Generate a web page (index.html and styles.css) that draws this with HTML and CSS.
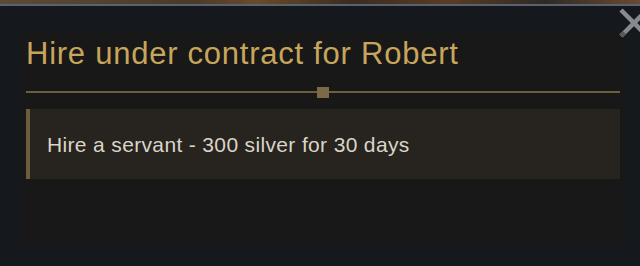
FILE: index.html
```html
<!DOCTYPE html>
<html lang="en">
<head>
    <meta charset="UTF-8">
    <meta name="viewport" content="width=device-width, initial-scale=1.0">
    <title>Hire under contract</title>
    <link rel="stylesheet" href="styles.css">
</head>
<body>

<!-- Game scene peeking out above the dialog -->
<div class="scene-strip"></div>

<div class="modal">
    <button class="close-btn" aria-label="Close">
        <svg width="32" height="32" viewBox="0 0 32 32">
            <line x1="3" y1="3" x2="29" y2="29" stroke="#878b90" stroke-width="4.5"/>
            <line x1="29" y1="3" x2="3" y2="29" stroke="#878b90" stroke-width="4.5"/>
            <line x1="3" y1="29" x2="6.5" y2="25.5" stroke="#55595e" stroke-width="4.5"/>
        </svg>
    </button>

    <div class="panel">
        <h2 class="panel-title">Hire under contract for Robert</h2>

        <div class="divider">
            <span class="divider-knot"></span>
        </div>

        <ul class="options">
            <li class="option">Hire a servant - 300 silver for 30 days</li>
        </ul>
    </div>
</div>

</body>
</html>
```

FILE: styles.css
```css
body {
    font-family: "Liberation Sans", Arial, sans-serif;
    background-color: #15191e;
    margin: 0;
    padding: 0;
    width: 640px;
    height: 266px;
    overflow: hidden;
}

.scene-strip {
    height: 4px;
    background: linear-gradient(90deg, #5a4a36 0%, #4a3a2a 30%, #6a4a2a 40%, #3a2c22 55%, #5a3c24 70%, #2e2a26 85%, #6a4a30 100%);
    border-bottom: 2px solid #59626d;
}

.modal {
    position: relative;
    padding: 26px 14px 19px 20px;
}

.close-btn {
    position: absolute;
    top: 1px;
    right: -10px;
    padding: 0;
    border: none;
    background: transparent;
    cursor: pointer;
}

.close-btn svg {
    display: block;
}

.panel {
    background-color: #181818;
    height: 215px;
    box-sizing: border-box;
    padding: 4px 6px 0 6px;
}

.panel-title {
    margin: 0;
    font-size: 31px;
    font-weight: normal;
    line-height: 36px;
    letter-spacing: 0.75px;
    color: #c7a55c;
}

.divider {
    position: relative;
    height: 12px;
    margin-top: 14px;
    display: flex;
    align-items: center;
    justify-content: center;
}

.divider::before {
    content: "";
    position: absolute;
    left: 0;
    right: 0;
    top: 5px;
    height: 2px;
    background-color: #6e5d3c;
}

.divider-knot {
    position: relative;
    width: 12px;
    height: 11px;
    background-color: #7a6a48;
}

.options {
    list-style: none;
    margin: 11px 0 0 0;
    padding: 0;
}

.option {
    background-color: #27231e;
    border-left: 4px solid #6e5d3c;
    padding: 24px 17px 22px 17px;
    font-size: 21px;
    line-height: 24px;
    letter-spacing: 0.35px;
    color: #d9d5c8;
    cursor: pointer;
}
```
